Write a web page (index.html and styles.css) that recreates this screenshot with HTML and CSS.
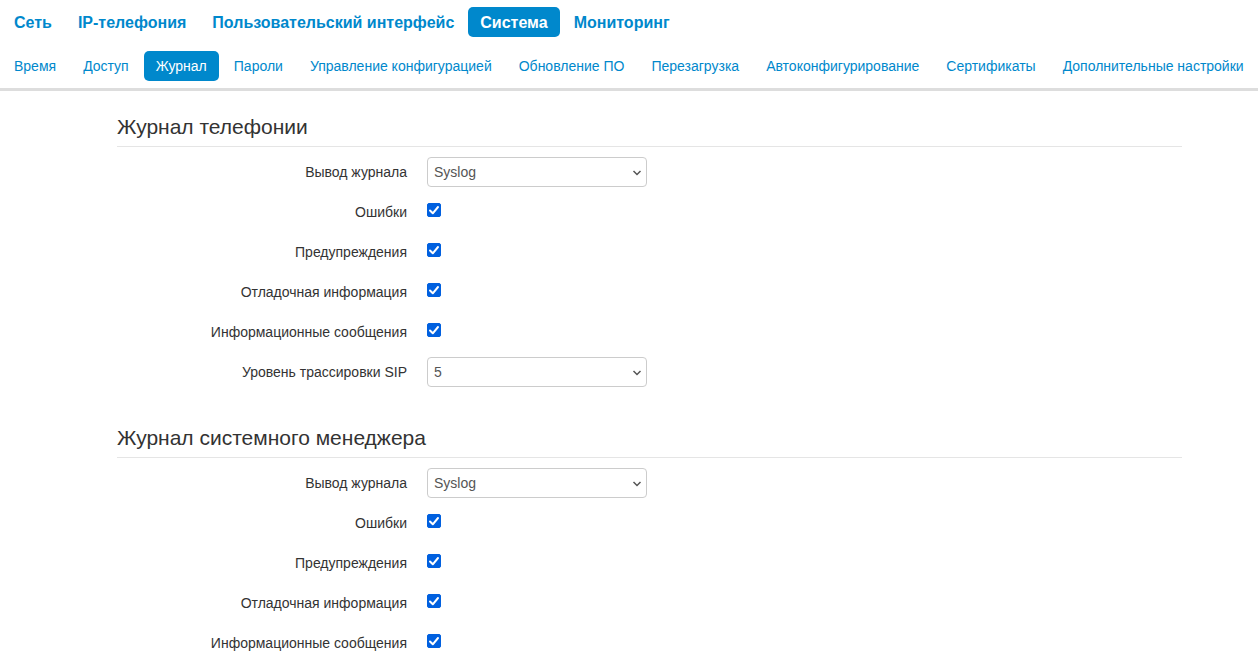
FILE: index.html
```
<!DOCTYPE html>
<html lang="ru">
    <head>
        <meta charset="utf-8">
        <meta name="viewport" content="width=device-width, initial-scale=1">
        <title>Журнал</title>
        <link rel="stylesheet" href="styles.css">
    </head>
    <body>
        <header class="header">
            <nav class="nav nav-main">
                <a href="#">Сеть</a>
                <a href="#">IP-телефония</a>
                <a href="#">Пользовательский интерфейс</a>
                <a href="#" class="active">Система</a>
                <a href="#">Мониторинг</a>
            </nav>
            <nav class="nav nav-sub">
                <a href="#">Время</a>
                <a href="#">Доступ</a>
                <a href="#" class="active">Журнал</a>
                <a href="#">Пароли</a>
                <a href="#">Управление конфигурацией</a>
                <a href="#">Обновление ПО</a>
                <a href="#">Перезагрузка</a>
                <a href="#">Автоконфигурирование</a>
                <a href="#">Сертификаты</a>
                <a href="#">Дополнительные настройки</a>
            </nav>
        </header>

        <form class="content">
            <section class="form-section">
                <h2>Журнал телефонии</h2>
                <div class="form-row">
                    <label for="voipOutput">Вывод журнала</label>
                    <select id="voipOutput">
                        <option selected>Syslog</option>
                    </select>
                </div>
                <div class="form-row">
                    <label for="voipErrors">Ошибки</label>
                    <input type="checkbox" id="voipErrors" checked>
                </div>
                <div class="form-row">
                    <label for="voipWarnings">Предупреждения</label>
                    <input type="checkbox" id="voipWarnings" checked>
                </div>
                <div class="form-row">
                    <label for="voipDebug">Отладочная информация</label>
                    <input type="checkbox" id="voipDebug" checked>
                </div>
                <div class="form-row">
                    <label for="voipInfo">Информационные сообщения</label>
                    <input type="checkbox" id="voipInfo" checked>
                </div>
                <div class="form-row">
                    <label for="sipLevel">Уровень трассировки SIP</label>
                    <select id="sipLevel">
                        <option selected>5</option>
                    </select>
                </div>
            </section>

            <section class="form-section">
                <h2>Журнал системного менеджера</h2>
                <div class="form-row">
                    <label for="sysOutput">Вывод журнала</label>
                    <select id="sysOutput">
                        <option selected>Syslog</option>
                    </select>
                </div>
                <div class="form-row">
                    <label for="sysErrors">Ошибки</label>
                    <input type="checkbox" id="sysErrors" checked>
                </div>
                <div class="form-row">
                    <label for="sysWarnings">Предупреждения</label>
                    <input type="checkbox" id="sysWarnings" checked>
                </div>
                <div class="form-row">
                    <label for="sysDebug">Отладочная информация</label>
                    <input type="checkbox" id="sysDebug" checked>
                </div>
                <div class="form-row">
                    <label for="sysInfo">Информационные сообщения</label>
                    <input type="checkbox" id="sysInfo" checked>
                </div>
            </section>
        </form>
    </body>
</html>
```

FILE: styles.css
```
* {
    box-sizing: border-box;
}

body {
    margin: 0;
    background-color: white;
    color: #333;
    font-family: "Liberation Sans", Arial, sans-serif;
    font-size: 14px;
    line-height: 20px;
}

/* navigation */
.header {
    display: flex;
    flex-direction: column;
    gap: 14px;
    padding: 7px 0;
    border-bottom: 3px solid #ddd;
}

.nav {
    display: flex;
    gap: 2px;
    padding-left: 2px;
    overflow-x: auto;
    scrollbar-width: none;
}

.nav a {
    flex: none;
    padding: 5px 12px;
    border-radius: 5px;
    color: #08c;
    text-decoration: none;
    white-space: nowrap;
}

.nav a.active {
    background-color: #08c;
    color: white;
}

.nav-main a {
    padding: 6px 12px 4px;
    font-size: 16px;
    font-weight: bold;
}

.nav-sub {
    gap: 3px;
}

/* settings form */
.content {
    display: flex;
    flex-direction: column;
    gap: 30px;
    padding: 15px 76px 0 117px;
}

.form-section {
    display: flex;
    flex-direction: column;
    gap: 10px;
}

.form-section h2 {
    margin: 0;
    padding-top: 2px;
    border-bottom: 1px solid #e5e5e5;
    font-size: 21px;
    font-weight: normal;
    line-height: 38px;
}

.form-row {
    display: flex;
    gap: 20px;
    min-height: 30px;
}

.form-row label {
    width: 290px;
    padding-top: 5px;
    text-align: right;
}

select {
    appearance: none;
    width: 220px;
    height: 30px;
    padding: 4px 20px 4px 6px;
    border: 1px solid #ccc;
    border-radius: 4px;
    background: white url("data:image/svg+xml,%3Csvg xmlns='http://www.w3.org/2000/svg' width='10' height='8'%3E%3Cpath d='M1.5 3l3.5 3.5 3.5-3.5' fill='none' stroke='%23555' stroke-width='1.5'/%3E%3C/svg%3E") no-repeat right 4px center;
    color: #555;
    font: inherit;
}

input[type="checkbox"] {
    appearance: none;
    width: 14px;
    height: 14px;
    margin: 6px 0 0;
    border: 1px solid #777;
    border-radius: 2px;
}

input[type="checkbox"]:checked {
    border-color: #0060df;
    background: #0060df url("data:image/svg+xml,%3Csvg xmlns='http://www.w3.org/2000/svg' width='12' height='12'%3E%3Cpath d='M2 6.5l2.8 2.8 5.2-6.3' fill='none' stroke='white' stroke-width='2' stroke-linecap='round' stroke-linejoin='round'/%3E%3C/svg%3E") no-repeat center;
}
```
